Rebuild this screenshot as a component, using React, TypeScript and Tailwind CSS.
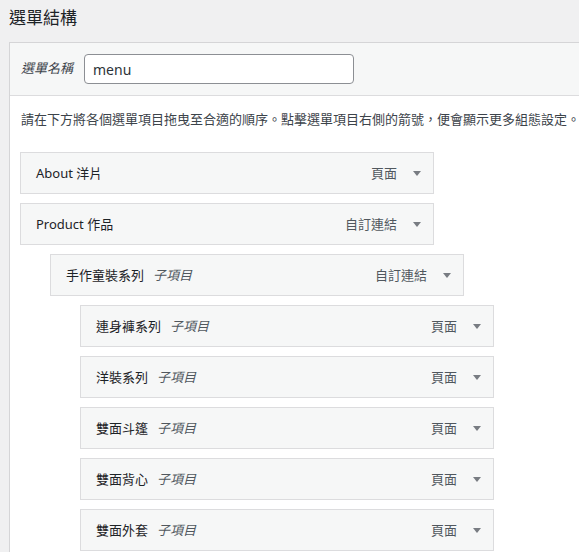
import React from 'react';

type MenuItem = {
  title: string;
  type: string;
  depth: number;
};

const items: MenuItem[] = [
  { title: 'About 洋片', type: '頁面', depth: 0 },
  { title: 'Product 作品', type: '自訂連結', depth: 0 },
  { title: '手作童裝系列', type: '自訂連結', depth: 1 },
  { title: '連身褲系列', type: '頁面', depth: 2 },
  { title: '洋裝系列', type: '頁面', depth: 2 },
  { title: '雙面斗篷', type: '頁面', depth: 2 },
  { title: '雙面背心', type: '頁面', depth: 2 },
  { title: '雙面外套', type: '頁面', depth: 2 },
];

const indent = ['ml-0', 'ml-[30px]', 'ml-[60px]'];

const font = 'font-["Noto_Sans","Noto_Sans_CJK_TC",sans-serif]';

const MenuRow: React.FC<{ item: MenuItem }> = ({ item }) => (
  <div
    className={`${indent[item.depth]} mb-[9px] flex h-[42px] w-[414px] items-center border border-[#dcdcde] bg-[#f6f7f7] pl-[15px] pr-[12px] pt-px`}
  >
    <span className="text-[13px] font-normal text-[#1d2327]">{item.title}</span>
    {item.depth > 0 && (
      <span className="ml-[9px] text-[13px] italic text-[#50575e]">子項目</span>
    )}
    <span className="ml-auto text-[13px] text-[#50575e]">{item.type}</span>
    <svg className="ml-[16px] -mt-px" width="8" height="5" viewBox="0 0 8 5">
      <path d="M0 0h8L4 5z" fill="#787c82" />
    </svg>
  </div>
);

export default function App() {
  return (
    <div className={`h-[552px] overflow-hidden bg-[#f0f0f1] pl-[9px] pt-[6px] ${font}`}>
      <h2 className="text-[17px] font-normal leading-[23px] text-[#1d2327]">選單結構</h2>

      <div className="mt-[13px] w-[640px] border border-[#d5d5d7] bg-white">
        <div className="flex h-[53px] items-center border-b border-[#dcdcde] bg-[#f6f7f7] pl-[11px]">
          <label className="w-[63px] text-[13px] italic text-[#3c434a]">選單名稱</label>
          <div className="flex h-[30px] w-[270px] items-center rounded-[4px] border border-[#8c8f94] bg-white pl-[8px] text-[14px] text-[#2c3338]">
            menu
          </div>
        </div>

        <div className="h-[500px] pl-[10px]">
          <p className="ml-px mt-[13px] whitespace-nowrap text-[13px] leading-[20px] text-[#3c434a]">
            請在下方將各個選單項目拖曳至合適的順序。點擊選單項目右側的箭號，便會顯示更多組態設定。
          </p>
          <div className="mt-[23px]">
            {items.map((item) => (
              <MenuRow key={item.title} item={item} />
            ))}
          </div>
        </div>
      </div>
    </div>
  );
}
